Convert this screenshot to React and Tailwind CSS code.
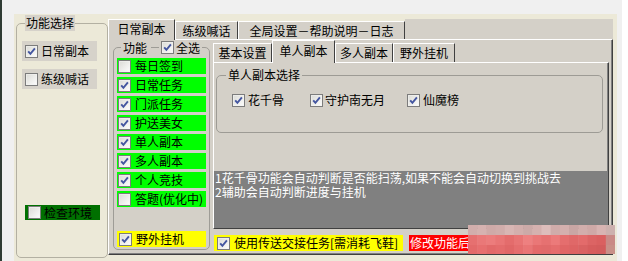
const MOSAIC_TOP = ["#d2aeac", "#d6b2b0", "#cfaaa8", "#d1adab", "#d8b6b4", "#d3afad", "#ccaaa8", "#d5b1af", "#ddbdbb", "#d0acaa", "#d4b0ae", "#c9a6a4", "#d2aeac", "#cfa9a7", "#d8b4b2", "#cdb1ae"];
const MOSAIC_MID = ["#e67070", "#ea7878", "#ec7c7c", "#e97575", "#e46c6c", "#e87474", "#ee8080", "#ea7777", "#e67171", "#ec7a7a", "#e56e6e", "#e06868", "#e36b6b", "#dc6464", "#da6060", "#c98a86"];
const MOSAIC_BOT = ["#e36a6a", "#e76f6f", "#e26969", "#e46c6c", "#e06767", "#e56e6e", "#e97575", "#e36a6a", "#e06a6a", "#e56d6d", "#e06666", "#dd6363", "#d96262", "#d65d5d", "#d35c5c", "#c89088"];

const DAILY = [
  { label: "每日签到", checked: false },
  { label: "日常任务", checked: true },
  { label: "门派任务", checked: true },
  { label: "护送美女", checked: true },
  { label: "单人副本", checked: true },
  { label: "多人副本", checked: true },
  { label: "个人竞技", checked: true },
  { label: "答题(优化中)", checked: false },
];

function Check({ checked }) {
  return (
    <svg width="13" height="13" viewBox="0 0 13 13" className="shrink-0">
      <defs>
        <linearGradient id="cbfill" x1="0" y1="0" x2="1" y2="1">
          <stop offset="0" stopColor="#d9d9d4" />
          <stop offset="1" stopColor="#ffffff" />
        </linearGradient>
      </defs>
      <rect x="0.5" y="0.5" width="12" height="12" fill="url(#cbfill)" stroke="#7c7c7c" />
      <rect x="1.5" y="1.5" width="10" height="10" fill="none" stroke="#f4f4f2" strokeOpacity="0.6" />
      {checked ? <path d="M3.2 6.3 5.4 8.8 9.9 3.4" fill="none" stroke="#4456a0" strokeWidth="1.9" /> : null}
    </svg>
  );
}

function Mosaic() {
  const w = 147 / 16;
  return (
    <svg width="147" height="29" viewBox="0 0 147 29" className="block">
      {MOSAIC_TOP.map((c, i) => (
        <rect key={"t" + i} x={i * w} y="0" width={w + 0.5} height="10" fill={c} />
      ))}
      {MOSAIC_MID.map((c, i) => (
        <rect key={"m" + i} x={i * w} y="10" width={w + 0.5} height="10" fill={c} />
      ))}
      {MOSAIC_BOT.map((c, i) => (
        <rect key={"b" + i} x={i * w} y="20" width={w + 0.5} height="9" fill={c} />
      ))}
    </svg>
  );
}

function Tab({ label, selected, className }) {
  if (selected) {
    return (
      <div className={`relative z-10 -mb-px flex items-center justify-center border-l border-t border-r border-l-white border-t-white border-r-[#404040] bg-[#d4d0c8] ${className}`}>
        <span className="pb-[2px]">{label}</span>
      </div>
    );
  }
  return (
    <div className={`flex items-center justify-center border-l border-t border-r border-l-white border-t-white border-r-[#404040] bg-[#d4d0c8] ${className}`}>
      <span>{label}</span>
    </div>
  );
}

function LeftGroup() {
  return (
    <fieldset className="ml-[2px] mt-[1px] h-[243px] w-[92px] rounded-[5px] border border-[#b3b0a2] pl-[5px]">
      <legend className="ml-[3px] h-[16px] bg-[#d6d2ca] px-[1px] leading-[16px]">功能选择</legend>
      <div className="mt-[10px] flex h-[20px] w-[75px] items-center gap-[3px] bg-[#d6d2ca] pl-[3px]">
        <Check checked />
        <span>日常副本</span>
      </div>
      <div className="mt-[8px] flex h-[20px] w-[75px] items-center gap-[3px] bg-[#d6d2ca] pl-[3px]">
        <Check checked={false} />
        <span>练级喊话</span>
      </div>
      <div className="ml-[3px] mt-[116px] flex h-[15px] w-[75px] items-center gap-[3px] bg-[#007000] pl-[3px]">
        <Check checked={false} />
        <span>检查环境</span>
      </div>
    </fieldset>
  );
}

function DailyColumn() {
  return (
    <fieldset className="ml-[4px] mt-px h-[209px] w-[97px] shrink-0 rounded-[5px] border border-[#9e9c96] pl-[3px]">
      <legend className="ml-[4px] flex h-[13px] items-center leading-[13px]">
        <span className="bg-[#d4d0c8] px-[2px]">功能</span>
        <span className="mx-[2px] h-px w-[8px] bg-[#9e9c96]" />
        <span className="flex items-center gap-[2px] bg-[#d4d0c8] pr-[2px]">
          <Check checked />
          <span>全选</span>
        </span>
      </legend>
      <div className="mt-[4px] flex flex-col gap-[3px]">
        {DAILY.map((item) => (
          <div key={item.label} className="flex h-[16px] w-[89px] items-center gap-[4px] bg-[#00ff00] pl-px">
            <Check checked={item.checked} />
            <span className="whitespace-nowrap">{item.label}</span>
          </div>
        ))}
      </div>
      <div className="mt-[24px] flex h-[16px] w-[89px] items-center gap-[4px] bg-[#ffff00] pl-[2px]">
        <Check checked />
        <span>野外挂机</span>
      </div>
    </fieldset>
  );
}

function SoloPanel() {
  return (
    <div className="ml-[3px] flex w-[396px] flex-col">
      <div className="flex h-[22px] items-end">
        <Tab label="基本设置" className="h-[19px] w-[59px]" />
        <Tab label="单人副本" selected className="h-[23px] w-[63px]" />
        <Tab label="多人副本" className="h-[19px] w-[58px]" />
        <Tab label="野外挂机" className="h-[19px] w-[62px]" />
      </div>
      <div className="h-[167px] border-b border-l border-r border-t border-b-[#404040] border-l-white border-r-[#404040] border-t-white">
        <div className="flex h-full flex-col border-b border-r border-[#808080]">
          <fieldset className="ml-[2px] mt-[5px] h-[65px] w-[387px] rounded-[5px] border border-[#9d9b95]">
            <legend className="ml-[9px] h-[14px] px-[2px] leading-[14px]">单人副本选择</legend>
            <div className="mt-[11px] flex items-center pl-[15px]">
              <div className="flex w-[78px] items-center gap-[3px]">
                <Check checked />
                <span>花千骨</span>
              </div>
              <div className="flex w-[97px] items-center gap-[2px]">
                <Check checked />
                <span>守护南无月</span>
              </div>
              <div className="flex items-center gap-[3px]">
                <Check checked />
                <span>仙魔榜</span>
              </div>
            </div>
          </fieldset>
          <div className="mt-[38px] h-[56px] bg-[#808080] pl-px leading-[14px] text-white">
            <p>1花千骨功能会自动判断是否能扫荡,如果不能会自动切换到挑战去</p>
            <p>2辅助会自动判断进度与挂机</p>
          </div>
        </div>
      </div>
      <div className="relative ml-px mt-[6px] flex h-[16px] items-center">
        <div className="flex h-[16px] w-[189px] items-center gap-[4px] bg-[#ffff00] pl-[3px]">
          <Check checked />
          <span className="whitespace-nowrap">使用传送交接任务[需消耗飞鞋]</span>
        </div>
        <div className="ml-[6px] flex h-[16px] w-[59px] items-center bg-[#ff0000] pl-px text-white">
          <span className="whitespace-nowrap">修改功能后</span>
        </div>
        <div className="absolute left-[254px] top-[-10px]">
          <Mosaic />
        </div>
      </div>
    </div>
  );
}

function MainTabs() {
  return (
    <div className="mt-[5px] flex h-[236px] w-[505px] flex-col">
      <div className="flex h-[20px] items-end">
        <Tab label="日常副本" selected className="h-[21px] w-[67px]" />
        <Tab label="练级喊话" className="h-[18px] w-[63px]" />
        <Tab label="全局设置－帮助说明－日志" className="h-[18px] w-[167px]" />
        <div className="h-full flex-1 bg-[#d4d0c8]" />
      </div>
      <div className="h-[216px] border-b border-l border-r border-t border-b-[#404040] border-l-white border-r-[#404040] border-t-white bg-[#d4d0c8]">
        <div className="flex h-full border-b border-r border-[#808080]">
          <DailyColumn />
          <SoloPanel />
        </div>
      </div>
    </div>
  );
}

export default function App() {
  return (
    <div className="flex h-[261px] w-[628px] overflow-hidden bg-[#f0f0f0] font-['Noto_Sans_CJK_SC',sans-serif] text-[12px] leading-[14px] text-black">
      <div className="h-full w-[2px] shrink-0 bg-[#2f3b33]" />
      <div className="ml-[12px] mt-[14px] flex h-[247px] w-[603px] shrink-0 bg-[#ece9d8]">
        <LeftGroup />
        <MainTabs />
      </div>
      <div className="ml-[5px] h-full w-[6px] shrink-0 bg-white" />
    </div>
  );
}
